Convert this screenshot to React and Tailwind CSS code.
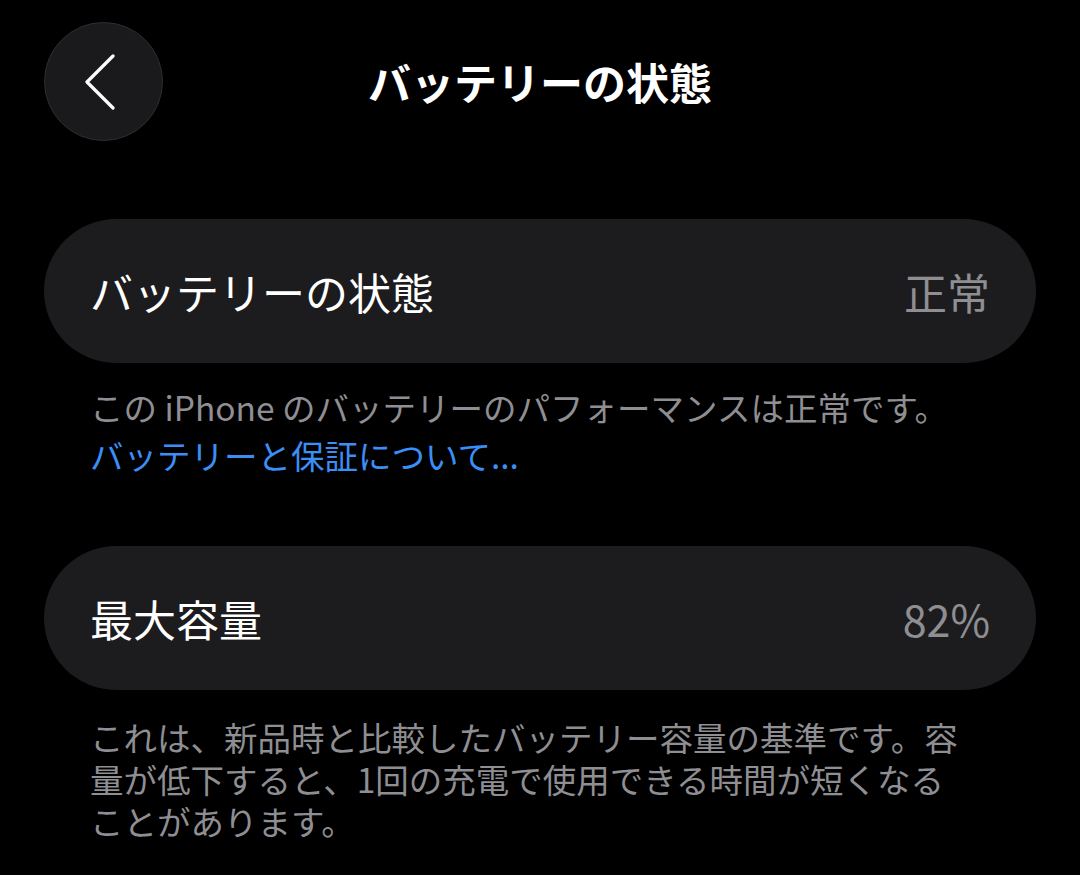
const font = { fontFamily: '"Noto Sans CJK JP", "Noto Sans", sans-serif' };

function Row({ label, value }) {
  return (
    <div className="flex h-[144px] items-center justify-between rounded-full bg-[#1c1c1e] px-[46px]">
      <span className="text-[43px] leading-none text-white">{label}</span>
      <span className="text-[43px] leading-none text-[#8e8e93]">{value}</span>
    </div>
  );
}

export default function App() {
  return (
    <div className="min-h-[875px] w-[1080px] bg-black px-[44px] pt-[22px]" style={font}>
      <header className="grid grid-cols-[1fr_auto_1fr] items-center">
        <button className="flex h-[119px] w-[119px] items-center justify-center rounded-full border border-[#2e2e30] bg-[#1a1a1c] text-white">
          <svg width="32" height="56" viewBox="0 0 32 56" fill="none" className="-ml-[8px]">
            <path d="M29 2 L3 28 L29 54" stroke="currentColor" strokeWidth="3.2" strokeLinecap="round" strokeLinejoin="round" />
          </svg>
        </button>
        <h1 className="text-[43px] font-semibold text-white">バッテリーの状態</h1>
        <div />
      </header>

      <section className="mt-[78px]">
        <Row label="バッテリーの状態" value="正常" />
        <p className="mt-[20px] px-[46px] text-[33.5px] leading-[48px] text-[#8e8e93]">
          この iPhone のバッテリーのパフォーマンスは正常です。
          <br />
          <span className="text-[#3b8ef5]">バッテリーと保証について...</span>
        </p>
      </section>

      <section className="mt-[67px]">
        <Row label="最大容量" value="82%" />
        <p className="mt-[26px] whitespace-nowrap px-[46px] text-[33.5px] leading-[42px] text-[#8e8e93]">
          これは、新品時と比較したバッテリー容量の基準です。容
          <br />
          量が低下すると、1回の充電で使用できる時間が短くなる
          <br />
          ことがあります。
        </p>
      </section>
    </div>
  );
}
